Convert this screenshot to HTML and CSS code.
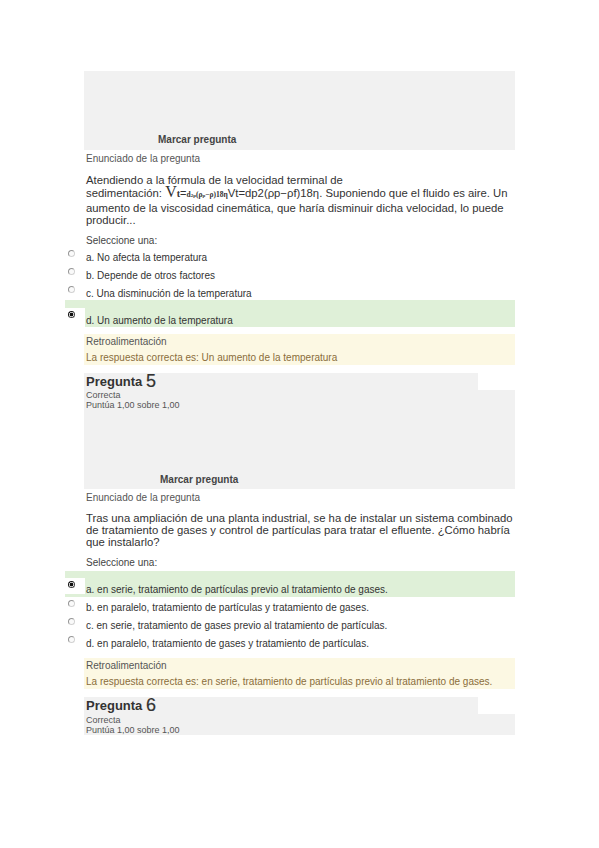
FILE: index.html
```html
<!DOCTYPE html>
<html lang="es">
<head>
<meta charset="utf-8">
<title>Revisión</title>
<link rel="stylesheet" href="styles.css">
</head>
<body>
<div class="page">

  <div class="info info-tail">
    <div class="flag">Marcar pregunta</div>
  </div>
  <div class="enun">Enunciado de la pregunta</div>
  <div class="qtext q4text">Atendiendo a la fórmula de la velocidad terminal de <span class="nw">sedimentación: <span class="mv">V</span><span class="ms">t</span><span class="meq">=</span><span class="tiny">d<sub>2p</sub>(ρ<sub>p</sub>−ρ)18η</span>Vt=dp2(ρp−ρf)18η.</span> Suponiendo que el fluido es aire. Un aumento de la viscosidad cinemática, que haría disminuir dicha velocidad, lo puede producir...</div>
  <div class="sel">Seleccione una:</div>
  <div class="answers q4">
    <div class="opt"><span class="radio"></span>a. No afecta la temperatura</div>
    <div class="opt"><span class="radio"></span>b. Depende de otros factores</div>
    <div class="opt opt-last"><span class="radio"></span>c. Una disminución de la temperatura</div>
    <div class="opt correct"><span class="rbox"><span class="radio on"></span></span>d. Un aumento de la temperatura</div>
  </div>
  <div class="feedback q4fb">
    <div class="fbh">Retroalimentación</div>
    <div class="fbt">La respuesta correcta es: Un aumento de la temperatura</div>
  </div>

  <div class="info info-full">
    <div class="qhead">Pregunta <span class="qno">5</span></div>
    <div class="qbody">
      <div class="state">Correcta</div>
      <div class="state">Puntúa 1,00 sobre 1,00</div>
      <div class="flag">Marcar pregunta</div>
    </div>
  </div>
  <div class="enun">Enunciado de la pregunta</div>
  <div class="qtext q5text">Tras una ampliación de una planta industrial, se ha de instalar un sistema combinado de tratamiento de gases y control de partículas para tratar el efluente. ¿Cómo habría que instalarlo?</div>
  <div class="sel">Seleccione una:</div>
  <div class="answers q5">
    <div class="opt correct"><span class="rbox"><span class="radio on"></span></span>a. en serie, tratamiento de partículas previo al tratamiento de gases.</div>
    <div class="opt"><span class="radio"></span>b. en paralelo, tratamiento de partículas y tratamiento de gases.</div>
    <div class="opt"><span class="radio"></span>c. en serie, tratamiento de gases previo al tratamiento de partículas.</div>
    <div class="opt"><span class="radio"></span>d. en paralelo, tratamiento de gases y tratamiento de partículas.</div>
  </div>
  <div class="feedback q5fb">
    <div class="fbh">Retroalimentación</div>
    <div class="fbt">La respuesta correcta es: en serie, tratamiento de partículas previo al tratamiento de gases.</div>
  </div>

  <div class="info info-last">
    <div class="qhead">Pregunta <span class="qno">6</span></div>
    <div class="qbody">
      <div class="state">Correcta</div>
      <div class="state">Puntúa 1,00 sobre 1,00</div>
    </div>
  </div>

</div>
</body>
</html>
```
FILE: styles.css
```css
html, body {
  margin: 0;
  padding: 0;
  background: #ffffff;
}
body {
  font-family: "Liberation Sans", Arial, sans-serif;
  color: #333333;
}
.page {
  width: 431px;
  margin-left: 84px;
  padding-top: 71px;
}

/* gray info box */
.info-tail {
  background: #f1f1f1;
  height: 79px;
  display: flex;
  flex-direction: column;
  justify-content: flex-end;
  padding-bottom: 4px;
  box-sizing: border-box;
}
.flag {
  font-size: 10px;
  line-height: 12px;
  font-weight: bold;
  color: #444444;
  padding-left: 74px;
}
.info-full, .info-last {
  margin-top: 8px;
}
.qhead {
  width: 394px;
  background: #f1f1f1;
  height: 17px;
  line-height: 17px;
  font-size: 13px;
  font-weight: bold;
  color: #333333;
  padding-left: 2px;
  box-sizing: border-box;
  white-space: nowrap;
}
.qno {
  font-size: 18px;
  font-weight: normal;
  vertical-align: top;
  line-height: 17px;
  -webkit-text-stroke: 0.2px #333333;
}
.qbody {
  background: #f1f1f1;
  padding-left: 2px;
  display: flex;
  flex-direction: column;
}
.info-full .qbody {
  height: 99px;
  padding-bottom: 3px;
  box-sizing: border-box;
}
.info-full .flag {
  margin-top: auto;
}
.info-last .qbody {
  height: 21px;
  padding-top: 1px;
  box-sizing: border-box;
}
.state {
  font-size: 9px;
  line-height: 10px;
  color: #555555;
}

.enun {
  margin-top: 3px;
  font-size: 10px;
  line-height: 12px;
  color: #555555;
  padding-left: 2px;
}
.qtext {
  font-size: 11.3px;
  line-height: 12px;
  color: #333333;
  padding-left: 2px;
}
.q4text { margin-top: 9px; }
.q5text { margin-top: 8px; }
.nw { white-space: nowrap; }
.mv {
  font-family: "Liberation Serif", "Times New Roman", serif;
  font-size: 16px;
  line-height: 12px;
}
.ms {
  font-family: "Liberation Serif", "Times New Roman", serif;
  font-size: 10px;
  font-weight: bold;
}
.meq {
  font-size: 11px;
}
.tiny {
  font-family: "Liberation Serif", "Times New Roman", serif;
  font-size: 7.5px;
  font-weight: bold;
}
.tiny sub {
  font-size: 5px;
  vertical-align: baseline;
}
.sel {
  margin-top: 9px;
  font-size: 10px;
  line-height: 12px;
  color: #444444;
  padding-left: 2px;
}

.answers {
  margin-top: 2px;
}
.opt {
  position: relative;
  height: 18px;
  line-height: 18px;
  font-size: 10px;
  color: #333333;
  padding-left: 2px;
  white-space: nowrap;
}
.opt-last {
  height: 15px;
}
.radio {
  position: absolute;
  left: -16px;
  top: 1px;
  width: 7px;
  height: 7px;
  border-radius: 50%;
  box-sizing: border-box;
  border: 1px solid #d2d2d2;
  border-top-color: #969696;
  border-left-color: #969696;
  background: #fafafa;
}
.correct {
  background: #dff0d8;
  margin-left: -19px;
  padding-left: 21px;
}
.rbox {
  position: absolute;
  left: 0;
  width: 20px;
  background: #ffffff;
}
.rbox .radio.on {
  left: 3px;
  top: 3px;
  border-color: #444444;
  border-top-color: #111111;
  border-left-color: #111111;
  background: radial-gradient(circle, #111111 0 1.7px, #ffffff 2.1px);
}
.q4 .correct {
  height: 27px;
  line-height: 12px;
  padding-top: 15px;
  box-sizing: border-box;
}
.q4 .rbox {
  top: 8px;
  height: 19px;
}
.q5 .correct {
  height: 26px;
  line-height: 12px;
  padding-top: 13px;
  box-sizing: border-box;
  margin-bottom: 2px;
}
.q5 .rbox {
  top: 7px;
  height: 16px;
}

.feedback {
  background: #fcf8e3;
  padding: 2px 2px 1px 2px;
  height: 31px;
  box-sizing: border-box;
}
.q4fb { margin-top: 7px; }
.q5fb { margin-top: 5px; }
.fbh {
  font-size: 10px;
  line-height: 12px;
  color: #555555;
}
.fbt {
  margin-top: 4px;
  font-size: 10px;
  line-height: 12px;
  color: #8a6d3b;
  white-space: nowrap;
}
```
